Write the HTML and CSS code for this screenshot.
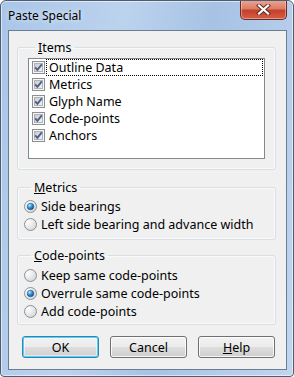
FILE: index.html
```html
<!DOCTYPE html>
<html lang="en">
<head>
    <meta charset="UTF-8" />
    <title>Paste Special</title>
    <link rel="stylesheet" href="styles.css">
</head>
<body>
    <div class="window">
        <div class="titlebar">
            <span class="title">Paste Special</span>
            <div class="close">
                <svg width="17" height="11" viewBox="0 0 17 11">
                    <path d="M4 1.5 L13 9.5 M13 1.5 L4 9.5" stroke="#5a2a20" stroke-width="4" stroke-linecap="square" />
                    <path d="M4 1.5 L13 9.5 M13 1.5 L4 9.5" stroke="#fff" stroke-width="2.2" stroke-linecap="square" />
                </svg>
            </div>
        </div>

        <div class="client">
            <fieldset class="group items">
                <legend><u>I</u>tems</legend>
                <div class="listbox">
                    <div class="row"><span class="check"></span><span class="label focus">Outline Data</span></div>
                    <div class="row"><span class="check"></span><span class="label">Metrics</span></div>
                    <div class="row"><span class="check"></span><span class="label">Glyph Name</span></div>
                    <div class="row"><span class="check"></span><span class="label">Code-points</span></div>
                    <div class="row"><span class="check"></span><span class="label">Anchors</span></div>
                </div>
            </fieldset>

            <fieldset class="group metrics">
                <legend><u>M</u>etrics</legend>
                <div class="option"><span class="radio on"></span>Side bearings</div>
                <div class="option"><span class="radio"></span>Left side bearing and advance width</div>
            </fieldset>

            <fieldset class="group codes">
                <legend><u>C</u>ode-points</legend>
                <div class="option"><span class="radio"></span>Keep same code-points</div>
                <div class="option"><span class="radio on"></span>Overrule same code-points</div>
                <div class="option"><span class="radio"></span>Add code-points</div>
            </fieldset>

            <div class="buttons">
                <button class="default">OK</button>
                <button>Cancel</button>
                <button><u>H</u>elp</button>
            </div>
        </div>
    </div>

    <script>
        // draw the checkbox and radio glyphs
        const CHECK = `<svg width="13" height="13" viewBox="0 0 13 13">
            <defs><linearGradient id="cb" x1="0" y1="0" x2="1" y2="1">
                <stop offset="0" stop-color="#c9c9c9"/><stop offset="1" stop-color="#f4f4f4"/></linearGradient></defs>
            <rect x="0.5" y="0.5" width="12" height="12" fill="#f6f6f6" stroke="#8f8f8f"/>
            <rect x="2.5" y="2.5" width="8" height="8" fill="url(#cb)" stroke="#aeb3b9"/>
            <path d="M3.2 6.4 L5.4 8.8 L9.8 3.4" fill="none" stroke="#4b5f8c" stroke-width="1.9"/>
        </svg>`;

        const RADIO = (on) => `<svg width="13" height="13" viewBox="0 0 13 13">
            <defs>
                <radialGradient id="rf" cx="0.3" cy="0.3" r="0.9">
                    <stop offset="0" stop-color="#ffffff"/><stop offset="1" stop-color="#cfd0d2"/></radialGradient>
                <radialGradient id="rd" cx="0.35" cy="0.3" r="0.8">
                    <stop offset="0" stop-color="#b8ecff"/><stop offset="0.5" stop-color="#2d8fd3"/><stop offset="1" stop-color="#0b3f7c"/></radialGradient>
            </defs>
            <circle cx="6.5" cy="6.5" r="6" fill="url(#rf)" stroke="#8e9094"/>
            ${on ? '<circle cx="6.5" cy="6.5" r="3.3" fill="url(#rd)" stroke="#1d5a92" stroke-width="0.6"/>' : ''}
        </svg>`;

        document.querySelectorAll('.check').forEach(el => el.innerHTML = CHECK);
        document.querySelectorAll('.radio').forEach(el => el.innerHTML = RADIO(el.classList.contains('on')));
    </script>
</body>
</html>
```

FILE: styles.css
```css
body { margin: 0; font-family: "Noto Sans", "Liberation Sans", sans-serif; font-size: 12.5px; color: #000; }
u { text-decoration: underline; text-underline-offset: 1px; }

.window { width: 294px; height: 377px; box-sizing: border-box; border: 1px solid #4f5d70; border-radius: 6px 6px 4px 4px; background: linear-gradient(100deg, #a9c5e8 0%, #bcd3ee 35%, #a7c2e4 60%, #c0d6ef 100%); box-shadow: inset 0 0 0 1px rgba(255,255,255,0.55); display: flex; flex-direction: column; overflow: hidden; }

.titlebar { height: 29px; display: flex; align-items: flex-start; flex-shrink: 0; }
.title { font-size: 12px; line-height: 14px; padding: 8px 0 0 7px; color: #000; text-shadow: 0 0 6px rgba(255,255,255,0.9); }
.close { margin: -1px 6px 0 auto; width: 45px; height: 19px; border: 1px solid #6b2a22; border-top: none; border-radius: 0 0 5px 5px; background: linear-gradient(#e9a897 0%, #dc7c65 45%, #c6402a 55%, #d2604a 100%); box-shadow: inset 0 0 0 1px rgba(255,220,210,0.45); display: flex; align-items: center; justify-content: center; }

.client { flex: 1; margin: 0 6px 6px 7px; border: 1px solid #6c7d92; background: #f0f0f0; padding: 9px 10px 0 8px; }

.group { margin: 0; border: 1px solid #d5dfe5; border-radius: 3px; box-shadow: inset 0 0 0 1px #fafafa; }
.group legend { margin-left: 7px; padding: 0 3px; line-height: 15px; }
.items { padding: 3px 10px 10px 10px; }
.metrics { margin-top: 10px; padding: 2px 6px 6px 6px; }
.codes { margin-top: 8px; padding: 3px 6px 4px 6px; }

.listbox { height: 99px; border: 1px solid #828790; background: #fff; padding: 0 1px 0 3px; }
.row { display: flex; align-items: center; height: 17px; }
.check { width: 13px; height: 13px; display: flex; margin-right: 1px; }
.row .label { flex: 1; height: 17px; line-height: 17px; padding-left: 2px; box-sizing: border-box; border: 1px solid transparent; display: flex; align-items: center; }
.row .focus { border: 1px dotted #000; }

.option { display: flex; align-items: center; height: 18px; }
.radio { width: 13px; height: 13px; display: flex; margin-right: 4px; }

.buttons { display: flex; gap: 11px; margin-top: 11px; padding-left: 5px; }
button { width: 77px; height: 22px; font: inherit; font-size: 12.5px; padding: 0; border: 1px solid #707070; border-radius: 3px; background: linear-gradient(#f2f2f2 0%, #ebebeb 48%, #dddddd 52%, #cfcfcf 100%); box-shadow: inset 0 0 0 1px rgba(255,255,255,0.8); color: #000; }
button.default { border-color: #3c7fb1; box-shadow: inset 0 0 0 1px #48d5f8, inset 0 0 0 2px rgba(255,255,255,0.5); }
```
